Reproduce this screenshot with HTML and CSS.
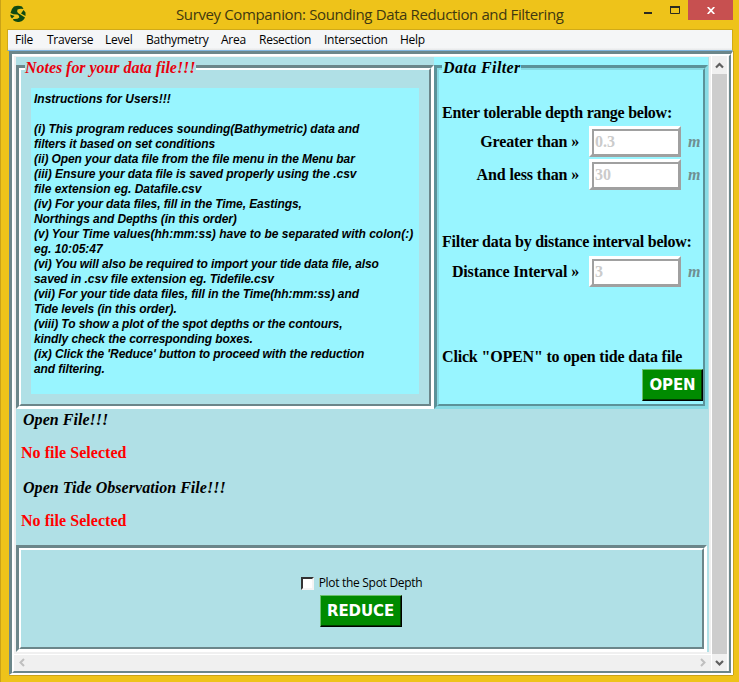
FILE: index.html
```
<!DOCTYPE html>
<html lang="en">
<head>
<meta charset="utf-8">
<title>Survey Companion: Sounding Data Reduction and Filtering</title>
<link rel="stylesheet" href="styles.css">
</head>
<body>
<div class="window">
  <header class="titlebar">
    <svg class="logo" width="18" height="18" viewBox="0 0 18 18"><path fill="#0f4a12" d="M5 1.500Q9 0 13 1.500L14.500 4Q11 3.200 8.500 4.500Q7.500 6.500 9 8L16 12.500Q14.500 16 11 16.700Q7 17.500 4.500 15.500L4 14Q8.500 14.500 10.300 12.500Q10.500 10.500 8.500 9.500Q4 9.500 1.500 8Q2 4 5 1.500ZM14.500 5L16.500 7.500V11L12 8.500ZM1.200 9.500L5.500 11L3 13.500Q1.300 12 1.200 9.500Z"/></svg>
    <h1 class="title">Survey Companion: Sounding Data Reduction and Filtering</h1>
    <div class="controls">
      <svg width="48" height="20" viewBox="0 0 48 20"><path fill="#2b2b20" d="M4 12h8v2H4z"/><path fill="none" stroke="#2b2b20" d="M30.500 7.500h9v6h-9z"/><path fill="#2b2b20" d="M30 6h10v2H30z"/></svg>
      <span class="close"><svg width="8" height="7" viewBox="0 0 8 7"><path d="M.7 0L7.300 7M7.300 0L.7 7" stroke="#fff" stroke-width="1.700"/></svg></span>
    </div>
  </header>
  <nav class="menu"><span class="m1">File</span><span class="m2">Traverse</span><span class="m3">Level</span><span class="m4">Bathymetry</span><span class="m5">Area</span><span class="m6">Resection</span><span class="m7">Intersection</span><span class="m8">Help</span></nav>
  <div class="frame"><div class="frame-in">
    <main class="canvas">
      <div class="top">
        <section class="notes">
          <div class="groove"><div class="groove-in">
            <h2 class="legend red"><span class="t-notes">Notes for your data file!!!</span></h2>
            <div class="text"><span class="wide">Instructions for Users!!!</span><br><br><span class="mid">(i) This program reduces sounding(Bathymetric) data and</span><br>filters it based on set conditions<br>(ii) Open your data file from the file menu in the Menu bar<br><span class="mid">(iii) Ensure your data file is saved properly using the .csv</span><br><span class="wide">file extension eg. Datafile.csv</span><br>(iv) For your data files, fill in the Time, Eastings,<br>Northings and Depths (in this order)<br><span class="wide">(v) Your Time values(hh:mm:ss) have to be separated with colon(:)</span><br><span class="wide">eg. 10:05:47</span><br>(vi) You will also be required to import your tide data file, also<br>saved in .csv file extension eg. Tidefile.csv<br>(vii) For your tide data files, fill in the Time(hh:mm:ss) and<br>Tide levels (in this order).<br>(viii) To show a plot of the spot depths or the contours,<br>kindly check the corresponding boxes.<br>(ix) Click the 'Reduce' button to proceed with the reduction<br>and filtering.</div>
          </div></div>
        </section>
        <section class="filter">
          <div class="groove"><div class="groove-in">
            <h2 class="legend"><span class="t-filter">Data Filter</span></h2>
            <p class="line l1"><span>Enter tolerable depth range below:</span></p>
            <div class="field"><label>Greater than »</label><span class="entry"><span>0.3</span></span><i>m</i></div>
            <div class="field"><label>And less than »</label><span class="entry"><span>30</span></span><i>m</i></div>
            <p class="line l2"><span>Filter data by distance interval below:</span></p>
            <div class="field"><label>Distance Interval »</label><span class="entry"><span>3</span></span><i>m</i></div>
            <p class="line l3"><span>Click "OPEN" to open tide data file</span></p>
            <button class="btn open">OPEN</button>
          </div></div>
        </section>
      </div>
      <section class="files">
        <h3>Open File!!!</h3>
        <p>No file Selected</p>
        <h3 class="tide">Open Tide Observation File!!!</h3>
        <p>No file Selected</p>
      </section>
      <section class="actions groove"><div class="groove-in">
        <div class="check"><span class="box"></span><span class="cap">Plot the Spot Depth</span></div>
        <button class="btn reduce">REDUCE</button>
      </div></section>
    </main>
    <div class="vscroll">
      <svg width="15" height="18" viewBox="0 0 15 18"><path d="M4 11.500L7.500 8L11 11.500" fill="none" stroke="#606060" stroke-width="2.200"/></svg>
      <div class="thumb"></div>
      <svg width="15" height="17" viewBox="0 0 15 17"><path d="M4 7L7.500 10.500L11 7" fill="none" stroke="#606060" stroke-width="2.200"/></svg>
    </div>
    <div class="hscroll">
      <svg width="16" height="16" viewBox="0 0 16 16"><path d="M10 4L6.500 7.500L10 11" fill="none" stroke="#bfbfbf" stroke-width="2"/></svg>
      <svg width="16" height="16" viewBox="0 0 16 16"><path d="M6 4L9.500 7.500L6 11" fill="none" stroke="#bfbfbf" stroke-width="2"/></svg>
    </div>
  </div></div>
</div>
</body>
</html>
```
FILE: styles.css
```
* { box-sizing: border-box; }
body { margin: 0; overflow: hidden; }
h1, h2, h3, p { margin: 0; font-size: inherit; }
svg { display: block; flex: none; }
.window {
  width: 739px; height: 682px; padding: 0 7px 6px 7px;
  background: #eec31a; border-left: 1px solid #c9a218;
  font-family: "Liberation Serif", serif; white-space: nowrap;
}
.titlebar { height: 29px; display: flex; justify-content: space-between; position: relative; }
.logo { margin: 5px 0 0 1px; }
.title {
  position: absolute; left: 168px; top: 4px;
  font: 400 15px/20px "Open Sans", sans-serif; letter-spacing: -0.37px; color: #3f3810;
}
.controls { display: flex; margin-right: -1px; }
.close { width: 45px; height: 20px; background: #c75050; display: flex; align-items: center; justify-content: center; }
.menu {
  height: 22px; margin: 0 -1px; border: 1px solid #d0aa18; border-bottom: 1px solid #7fb6df;
  background: linear-gradient(#f5f6f7 18px, #eaebec 19px); padding-left: 7px;
  display: flex; font: 12px/20px "Open Sans", sans-serif; letter-spacing: -0.25px; color: #000;
}
.m1 { width: 32px; } .m2 { width: 58px; } .m3 { width: 41px; } .m4 { width: 75px; }
.m5 { width: 38px; } .m6 { width: 65px; } .m7 { width: 76px; }
.frame {
  height: 624px; margin: 0 -1px 0 1px; box-shadow: 0 1px #c9a218, 1px 0 #c9a218;
  border: solid; border-width: 3px 2px 2px 3px; border-color: #6b868a #fff #fff #6b868a;
}
.frame-in {
  height: 100%; border: 2px solid; border-color: #fff #6b868a #6b868a #fff; background: #f0f0f0;
  display: grid; grid-template-columns: 697px 17px; grid-template-rows: 598px 17px;
}
.canvas { margin: 1px 2px 2px 2px; width: 693px; background: #b0e0e6; display: flex; flex-direction: column; }
.vscroll { grid-row: 1 / 3; grid-column: 2; border: solid #fff; border-width: 0 1px; display: flex; flex-direction: column; }
.vscroll .thumb { flex: 1; background: #cdcdcd; }
.hscroll { grid-row: 2; grid-column: 1; border-top: 1px solid #fff; display: flex; justify-content: space-between; }
.groove { border: 3px solid; border-color: #6b868a #fff #fff #6b868a; }
.groove-in { border: 2px solid; border-color: #fff #6b868a #6b868a #fff; height: 100%; }
.top { height: 352px; display: flex; }
.notes { width: 418px; padding-top: 8px; }
.notes .groove, .filter .groove { height: 344px; }
.filter { width: 274px; padding-top: 8px; background: #98f5ff; }
.filter .groove { border-color: #5b9299 #87dbe4 #87dbe4 #5b9299; }
.filter .groove-in { border-color: #87dbe4 #5b9299 #5b9299 #87dbe4; display: flex; flex-direction: column; }
.legend { height: 18px; margin-top: -11px; font: italic bold 16px/18px "Liberation Serif", serif; }
.legend span { display: inline-block; height: 18px; margin-left: 4px; background: #b0e0e6; }
.red { color: #e8000d; }
.t-notes { width: 171px; letter-spacing: -0.04px; }
.filter .legend span { background: #98f5ff; width: 79px; padding-left: 1px; margin-left: 3px; letter-spacing: 0.4px; }
.text {
  margin: 11px 0 0 10px; width: 388px; height: 306px; padding: 4px 3px; background: #98f5ff;
  font: italic bold 12px/15px "Liberation Sans", sans-serif; letter-spacing: -0.09px; color: #000;
}
.mid { letter-spacing: -0.05px; }
.wide { letter-spacing: 0; }
.line { font: bold 16px/20px "Liberation Serif", serif; padding-left: 3px; height: 20px; letter-spacing: -0.26px; }
.l1 { margin-top: 26px; margin-bottom: 3px; }
.l2 { margin-top: 40px; margin-bottom: 4px; }
.l3 { margin-top: 58px; letter-spacing: -0.17px; }
.field { display: flex; align-items: center; height: 33px; font-weight: bold; font-size: 16px; padding-bottom: 2px; }
.field label { width: 140px; text-align: right; letter-spacing: -0.14px; }
.entry { margin-left: 10px; width: 92px; height: 31px; border: 3px solid; border-color: #fff #a0a0a0 #a0a0a0 #fff; background: #fff; color: #cbcbcb; }
.entry span { display: block; height: 25px; border: solid #a0a0a0; border-width: 2px 0 0 2px; padding-left: 1px; line-height: 22px; }
.field i { color: #6f8f92; margin-left: 7px; }
.btn {
  padding: 0; border: 1px solid; border-color: #6cc06c #000 #000 #6cc06c; box-shadow: inset -1px -1px #003c00;
  background: #008b00; color: #fff; font: bold 15px/28px "DejaVu Sans", sans-serif; height: 32px;
}
.open { width: 61px; align-self: flex-end; margin-top: 2px; letter-spacing: -0.1px; }
.reduce { width: 82px; margin-right: 2px; letter-spacing: -0.1px; }
.files { height: 136px; padding: 2px 0 0 5px; font: bold 16px/18px "Liberation Serif", serif; letter-spacing: 0.04px; }
.files h3 { font-style: italic; padding-left: 2px; height: 33px; }
.files p { color: #f00; height: 35px; }
.actions { width: 691px; height: 107px; }
.actions .groove-in { display: flex; flex-direction: column; align-items: center; padding-top: 24px; }
.check { display: flex; align-items: center; height: 18px; margin-bottom: 3px; font: 12px/18px "Open Sans", sans-serif; letter-spacing: -0.3px; }
.box { width: 13px; height: 13px; margin-right: 5px; background: #fff; border: 2px solid; border-color: #333 #f4f4f4 #f4f4f4 #333; }
```
